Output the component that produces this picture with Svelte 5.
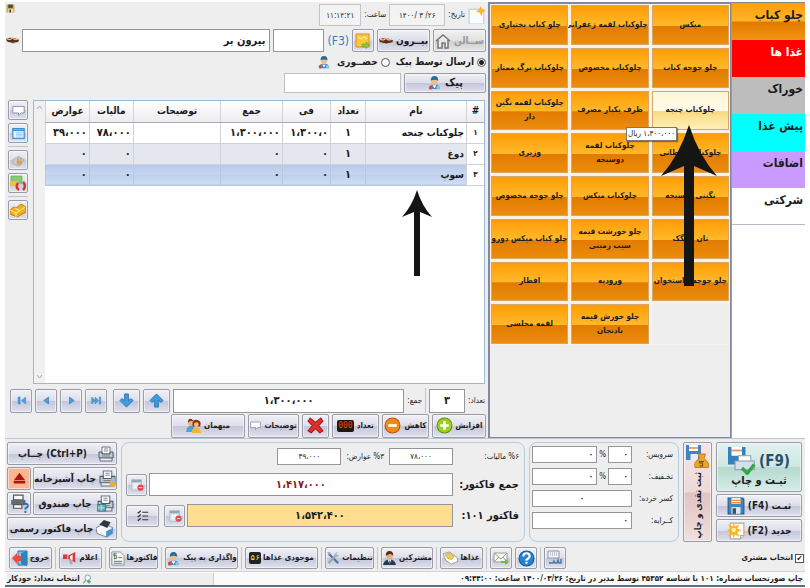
<script lang="ts">
  type Category = { name: string; kind: string }
  type OrderLine = { name: string; count: string; price: string; total: string; note: string; tax: string; duty: string }

  const categories: Category[] = [
    { name: 'چلو کباب', kind: 'kebab' },
    { name: 'غذا ها', kind: 'foods' },
    { name: 'خوراک', kind: 'stew' },
    { name: 'پیش غذا', kind: 'starter' },
    { name: 'اضافات', kind: 'extras' },
    { name: 'شرکتی', kind: 'company' },
  ]

  // a line break marks where a long dish name wraps on its tile
  const dishes = [
    'میکس', 'چلوکباب لقمه زعفرانی', 'چلو کباب بختیاری',
    'چلو جوجه کباب', 'چلوکباب مخصوص', 'چلوکباب برگ ممتاز',
    'چلوکباب چنجه', 'ظرف یکبار مصرف', 'چلوکباب لقمه نگین\nدار',
    'چلوکباب سلطانی', 'چلوکباب لقمه\nدوسیخه', 'وزیری',
    'نگینی دوسیخه', 'چلوکباب میکس', 'چلو جوجه مخصوص',
    'نان سنگک', 'چلو خورشت قیمه\nسیب زمینی', 'چلو کباب میکس دورو',
    'چلو جوجه بااستخوان', 'ورودیه', 'افطار',
    '', 'چلو خورش قیمه\nبادنجان', 'لقمه مجلسی',
  ]

  const lines: OrderLine[] = [
    { name: 'چلوکباب چنجه', count: '۱', price: '۱،۳۰۰،۰', total: '۱،۳۰۰،۰۰۰', note: '', tax: '۷۸،۰۰۰', duty: '۳۹،۰۰۰' },
    { name: 'دوغ', count: '۱', price: '۰', total: '۰', note: '', tax: '۰', duty: '۰' },
    { name: 'سوپ', count: '۱', price: '۰', total: '۰', note: '', tax: '۰', duty: '۰' },
  ]
  const rowNumbers = ['۱', '۲', '۳']

  let category = $state('kebab')
  let dish = $state('چلوکباب چنجه')
  let selected = $state(2)
  let delivery = $state('courier')
  let pickCustomer = $state(true)
</script>

{#snippet icon(name: string, size: number)}
  <svg class="icon" width={size} height={size} viewBox="0 0 16 16" aria-hidden="true">
    {#if name === 'floppy'}
      <path d="M1 1h13l1 1v13H1z" fill="#3f86c4" stroke="#285a8c" />
      <path d="M4 1h8v5H4z" fill="#fff" /><path d="M4 3h8M4 5h8" stroke="#e98a3a" />
      <path d="M4 9h8v6H4z" fill="#dfe6ee" /><path d="M5 10h3v5H5z" fill="#3b5268" />
    {:else if name === 'mini-floppy'}
      <path d="M1 1h14v14H1z" fill="#c9a94f" /><path d="M4 1h8v6H4z" fill="#4b4a3a" /><path d="M4 9h9v6H4z" fill="#eee2b4" /><path d="M6 10h3v5H6z" fill="#454230" />
    {:else if name === 'new'}
      <path d="M3 1h12v11l-3 3H3z" fill="#fffdf6" stroke="#b3aa98" /><path d="M15 12h-3v3" fill="#e8dfc8" stroke="#b3aa98" />
      <path d="M6 0l1 4 4-2-2 4 4 1-4 2 2 4-4-2-1 4-1-4-4 2 2-4-3-2 3-1-2-4 4 2z" fill="#ffb322" />
      <circle cx="6" cy="7" r="2" fill="#fff0a0" />
    {:else if name === 'dated'}
      <path d="M1 3h13v13H1z" fill="#fbfdff" stroke="#c4ccd8" />
      <path d="M11 0l1.500 3L16 4l-3 1.500L12 9l-1.500-3L7 5l3-2z" fill="#ffb51b" />
    {:else if name === 'house'}
      <path d="M1 8l7-6 7 6M3 7v8h4v-5h3v5h3V7" fill="#ececec" stroke="#777" stroke-width="1.500" />
    {:else if name === 'kebab'}
      <path d="M0 6q7-3 16 1l-1 3q-8 3-14-1z" fill="#5b2c1d" />
      <path d="M1 6l4 1 3-2 3 2 4-1" stroke="#efc18b" fill="none" stroke-width="1.500" /><path d="M2 10q6 3 13 0" stroke="#ddd" fill="none" />
    {:else if name === 'courier'}
      <path d="M2 15q0-5 6-5t6 5z" fill="#3d8dc4" /><circle cx="8" cy="7" r="3.500" fill="#f0bd8e" />
      <path d="M4 6q0-5 4-5t4 5q-4-2-8 0z" fill="#276b9c" /><path d="M6 11h4l-2 3z" fill="#fff" />
      <circle cx="4" cy="13.500" r="2" fill="#d84b3b" /><circle cx="12" cy="13.500" r="2" fill="#85c7e8" />
    {:else if name === 'note'}
      <path d="M1 1h13v13H1z" fill="#ffc83b" stroke="#d98f17" /><path d="M3 4l3 2 3-2 3 2" stroke="#fff1a5" fill="none" />
      <path d="M7 11h4V9l4 3-4 3.500V14H7z" fill="#8dc63f" stroke="#5e912a" stroke-width=".5" />
    {:else if name === 'comment'}
      <path d="M1 3h14v8h-4l-3 3v-3H1z" fill="#fdfdff" stroke="#79859b" />
    {:else if name === 'window'}
      <path d="M1 2h14v12H1z" fill="#e8f3fd" stroke="#418ecb" stroke-width="1.500" /><path d="M1 4h14" stroke="#418ecb" stroke-width="2" /><path d="M5 7h8M5 9h8M5 11h8" stroke="#8ebce3" />
    {:else if name === 'lockbox'}
      <path d="M1 7l7-4 7 4-6 8-8-3z" fill="#d3c8bd" stroke="#b3aba3" /><path d="M6 8h6v5H6z" fill="#d9a153" /><path d="M7 8V6q2-3 4 0v2" fill="none" stroke="#999" />
    {:else if name === 'refresh'}
      <path d="M1 1h11v7H1z" fill="#8bc974" stroke="#5b9d45" stroke-width=".6" /><path d="M0 6h8v5H0z" fill="#ebc04f" />
      <path d="M8 8q-3 4 1 7M13 15q4-4 0-8" fill="none" stroke="#d83737" stroke-width="2.500" />
    {:else if name === 'gold'}
      <path d="M0 8l4-3 2 1 5-4 5 3v5l-9 5-7-3z" fill="#f5ad20" stroke="#c77e0f" /><path d="M0 8l6 3 9-6M6 11v4M5 6l5 3" stroke="#fff09a" fill="none" />
    {:else if name === 'plus' || name === 'minus'}
      <circle cx="8" cy="8" r="7" fill={name === 'plus' ? '#9bd11c' : '#f18a18'} stroke={name === 'plus' ? '#5e9313' : '#b75a0b'} />
      <path d={name === 'plus' ? 'M4 8h8M8 4v8' : 'M4 8h8'} stroke="#fff" stroke-width="2.500" />
    {:else if name === 'cross'}
      <path d="M3 1l5 4 5-4 2 3-4 4 4 5-3 2-4-4-4 4-3-2 4-5-4-4z" fill="#df2f2b" stroke="#a91b1b" />
    {:else if name === 'guest'}
      <circle cx="5" cy="5" r="3" fill="#eab57b" /><path d="M2 5q0-5 4-4l3 3-4-1z" fill="#7b2e19" /><path d="M0 15q1-7 5-7t5 7z" fill="#4ea3d5" />
      <path d="M7 9q-1-8 5-7 5 1 3 7z" fill="#8c2f18" /><circle cx="11" cy="7" r="2.500" fill="#f0be87" /><path d="M6 16q0-6 5-6 5 1 5 6z" fill="#f4b333" />
    {:else if name === 'up'}
      <path d="M8 1l7 7-2 2-3-2v7H6V8l-3 2-2-2z" fill="#3d9ddf" stroke="#2a76b2" />
    {:else if name === 'down'}
      <path d="M8 15l7-7-2-2-3 2V1H6v7L3 6 1 8z" fill="#3d9ddf" stroke="#2a76b2" />
    {:else if name === 'next'}
      <path d="M5 3l7 5-7 5z" fill="#4aa0dc" stroke="#347eb5" />
    {:else if name === 'prev'}
      <path d="M11 3L4 8l7 5z" fill="#4aa0dc" stroke="#347eb5" />
    {:else if name === 'last'}
      <path d="M1 3l5 5-5 5zM6 3l5 5-5 5zM12 3h2v10h-2z" fill="#4aa0dc" stroke="#347eb5" stroke-width=".7" />
    {:else if name === 'first'}
      <path d="M14 3L8 8l6 5zM3 3h3v10H3z" fill="#4aa0dc" stroke="#347eb5" stroke-width=".7" />
    {:else if name.startsWith('printer')}
      <path d="M4 1h8v7H4z" fill="#fff" stroke="#6b7580" /><path d="M1 6h3v2h8V6h3v6H1z" fill="#c3cad1" stroke="#525c66" /><path d="M2 12h12v3H2z" fill="#e9ecee" stroke="#687480" /><path d="M6 3h4M6 5h4M4 10h8" stroke="#7a8794" />
      {#if name === 'printer-food'}<circle cx="13" cy="13" r="3" fill="#f1a83c" /><path d="M11 8h4v3h-4z" fill="#8fc0e6" />{/if}
      {#if name === 'printer-cash'}<path d="M0 9h8v6H0z" fill="#6bb0bf" stroke="#36798a" /><path d="M1 12h6M4 9v6" stroke="#d3edf2" stroke-width=".7" />{/if}
    {:else if name === 'print-office'}
      <path d="M0 7l7-4 8 4-6 8-8-3z" fill="#f6f7f8" stroke="#66717b" stroke-width=".7" /><path d="M3 4l4-4 6 2-3 5z" fill="#303a43" /><path d="M9 10l6-3v5l-6 4z" fill="#4b94cb" />
    {:else if name === 'help-printer'}
      <path d="M3 1h8v4H3z" fill="#fff" stroke="#555" /><path d="M1 5h12v4H1z" fill="#656b71" /><path d="M3 9h7v3H3z" fill="#fff" stroke="#555" /><path d="M11 9q4-2 4 1 0 1-2 2v1M13 14v2" stroke="#246eaf" stroke-width="1.500" fill="none" />
    {:else if name === 'eject'}
      <path d="M8 1l7 9H1zM1 11h14v3H1z" fill="#a91712" />
    {:else if name === 'calc'}
      <path d="M2 2h11v12H2z" fill="#dbe4ea" stroke="#b3bec8" /><path d="M2 2h11v3H2z" fill="#96a8b7" /><path d="M4 7h7M4 9h7M4 11h4" stroke="#fff" /><circle cx="12" cy="11" r="3.500" fill="#e44653" /><path d="M10 11h4" stroke="#fff" />
    {:else if name === 'checks'}
      <path d="M1 3l1 1 3-3M1 8l1 1 3-3M1 13l1 1 3-3M7 3h8M7 8h8M7 13h8" fill="none" stroke="#333" stroke-width="1.500" />
    {:else if name === 'cash'}
      <path d="M0 0h10v10H0z" fill="#3f86c4" /><path d="M2 0h6v4H2z" fill="#fff" /><path d="M2 2h6" stroke="#e98a3a" /><path d="M3 6h5v4H3z" fill="#e9edf1" />
      <path d="M8 6h5l-1 3q4 3 3 6H6q-1-4 3-6z" fill="#eba629" stroke="#b97b15" stroke-width=".6" /><path d="M12 11h-3v1h2v2H9" fill="none" stroke="#754c09" stroke-width=".8" />
    {:else if name === 'save-print'}
      <path d="M0 0h10v10H0z" fill="#3481bb" /><path d="M2 0h6v5H2z" fill="#fff" /><path d="M2 2h6" stroke="#f28a4d" />
      <path d="M6 5h7v4H6z" fill="#fff" stroke="#8da3b1" stroke-width=".6" /><path d="M4 8h11v5H4z" fill="#d6e0eb" stroke="#8a9bad" stroke-width=".6" /><path d="M8 12l3 3 4-5" stroke="#30a849" stroke-width="2" fill="none" />
    {:else if name === 'keyboard'}
      <path d="M1 1h11v7H1z" fill="#f4f5f7" stroke="#8b96a3" /><path d="M3 3h8M3 5h8" stroke="#8b96a3" stroke-dasharray="1 1" /><path d="M2 13h4l1-2 1 2h2l1-3 1 3h2V9" fill="none" stroke="#477ba5" stroke-width="1.500" />
    {:else if name === 'help'}
      <circle cx="8" cy="8" r="7" fill="#2781cf" stroke="#125798" /><path d="M5 6q0-3 3-3t3 3q0 1-3 3v1M8 11v2" stroke="#fff" stroke-width="2" fill="none" />
    {:else if name === 'mail'}
      <path d="M1 3h13v9H1z" fill="#f8f8f1" stroke="#9aa08f" /><path d="M1 3l7 6 6-6M1 12l5-5M14 12l-4-5" fill="none" stroke="#9aa08f" /><path d="M8 11h4V9l4 3-4 3v-2H8z" fill="#77b939" />
    {:else if name === 'plate'}
      <path d="M0 3l7-2 8 6 1 4-7 3-6-4z" fill="#fffdf3" stroke="#8e8b79" stroke-width=".8" /><path d="M2 4l5-2 5 4-3 3-4-1z" fill="#e9cf55" stroke="#ad8d27" stroke-width=".6" />
    {:else if name === 'person'}
      <circle cx="8" cy="5" r="3.500" fill="#e9ad78" /><path d="M4 5q0-5 4-5t4 5L9 3z" fill="#542c19" /><path d="M1 15q1-6 7-6t7 6z" fill="#243b57" /><path d="M6 9h4l-2 5z" fill="#fff" /><path d="M8 10v4" stroke="#c9392b" />
    {:else if name === 'tools'}
      <path d="M3 3l11 11" stroke="#4f7ba2" stroke-width="2.500" /><path d="M12 4L3 14" stroke="#9aa7b3" stroke-width="2.500" /><path d="M10 3q1-2 4-2l-2 2 1 2 2-1q0 3-4 3zM1 1h4v3H3z" fill="#a9b5c0" />
    {:else if name === 'invoice'}
      <path d="M2 1h9l4 4v10H2z" fill="#f6f7f5" stroke="#88918e" /><path d="M7 3H4v2h3v3H4M5 2v7M9 7h4M4 11h9M4 13h9" fill="none" stroke="#65716d" />
    {:else if name === 'horn'}
      <path d="M0 4h5v5H0zM6 5l8-4v12l-8-4z" fill="#d83b33" /><path d="M8 6l3-2v7L8 9z" fill="#f6f1ef" /><path d="M7 10h3l1 5H8z" fill="#a5adb4" />
    {:else if name === 'exit'}
      <path d="M6 1h9v14H6z" fill="#8ac1e9" stroke="#2a699c" /><path d="M9 3l6-2v15l-6-2z" fill="#2e83bf" /><path d="M0 8l5-5v3h4v5H5v3z" fill="#ec4b3f" />
    {:else if name === 'search'}
      <circle cx="9" cy="6" r="4.500" fill="#eef8ff" stroke="#879bab" stroke-width="1.500" /><path d="M6 10l-4 5" stroke="#879bab" stroke-width="2" /><path d="M8 12h6M11 9v6" stroke="#4aa94f" stroke-width="2" />
    {/if}
  </svg>
{/snippet}

<svelte:head><title>ثبت سفارش</title></svelte:head>

<div class="app" dir="rtl">
  <div class="top">
    <nav class="categories">
      {#each categories as c (c.kind)}
        <button class="category {c.kind}" aria-pressed={category === c.kind} onclick={() => (category = c.kind)}>{c.name}</button>
      {/each}
    </nav>

    <section class="menu">
      <div class="dishes">
        {#each dishes as d}
          {#if d}
            <button class="dish" class:active={dish === d} onclick={() => (dish = d)}>{d}</button>
          {:else}
            <span></span>
          {/if}
        {/each}
      </div>
      <div class="tip">۱،۳۰۰،۰۰۰ ریال</div>
      <svg class="pointer big" width="56" height="161" viewBox="0 0 56 161" aria-hidden="true">
        <path d="M28 0Q38 31 56 51L33 41V161H23V41L0 51Q18 31 28 0z" fill="#151515" />
      </svg>
    </section>

    <section class="order">
      <div class="row dates">
        {@render icon('dated', 18)}
        <label for="date">تاریخ:</label>
        <input id="date" class="stamp date" dir="ltr" value="۱۴۰۰/ ۳ /۲۶" />
        <label for="time">ساعت:</label>
        <input id="time" class="stamp time" dir="ltr" value="۱۱:۱۴:۲۱" />
        <span class="fill"></span>
        <span class="corner">{@render icon('mini-floppy', 9)}</span>
      </div>

      <div class="row place">
        <button class="btn hall" disabled>ســالن {@render icon('house', 16)}</button>
        <button class="btn out">بیــرون {@render icon('kebab', 14)}</button>
        <button class="btn square" aria-label="یادداشت">{@render icon('note', 16)}</button>
        <label class="key" for="code" dir="ltr">(F3)</label>
        <input id="code" class="code" />
        <input class="fill customer" aria-label="مشتری" value="بیرون بر" />
        {@render icon('kebab', 13)}
      </div>

      <div class="row send">
        <label><input type="radio" name="send" value="courier" bind:group={delivery} />ارسال توسط پیک</label>
        <label><input type="radio" name="send" value="person" bind:group={delivery} />حضــوری</label>
        {@render icon('courier', 14)}
      </div>

      <div class="row rider">
        <button class="btn">پیک {@render icon('courier', 15)}</button>
        <input aria-label="نام پیک" />
      </div>

      <div class="sheet">
        <div class="grid">
          <div class="cells">
            <table>
              <colgroup>
                <col class="w-no" /><col class="w-name" /><col class="w-count" /><col class="w-price" />
                <col class="w-total" /><col class="w-note" /><col class="w-tax" /><col class="w-tax" />
              </colgroup>
              <thead>
                <tr><th>#</th><th>نام</th><th>تعداد</th><th>فی</th><th>جمع</th><th>توضیحات</th><th>مالیات</th><th>عوارض</th></tr>
              </thead>
              <tbody>
                {#each lines as line, i}
                  <tr class:selected={selected === i} onclick={() => (selected = i)}>
                    <th scope="row">{rowNumbers[i]}</th>
                    <td>{line.name}</td>
                    <td class="num center">{line.count}</td>
                    <td class="num">{line.price}</td>
                    <td class="num">{line.total}</td>
                    <td>{line.note}</td>
                    <td class="num">{line.tax}</td>
                    <td class="num">{line.duty}</td>
                  </tr>
                {/each}
              </tbody>
            </table>
            <svg class="pointer small" width="30" height="86" viewBox="0 0 30 86" aria-hidden="true">
              <path d="M15 0Q20 16 30 27L18 22V86H12V22L0 27Q10 16 15 0z" fill="#151515" />
            </svg>
          </div>
          <div class="scroll" aria-hidden="true">
            <svg width="7" height="5" viewBox="0 0 7 5"><path d="M1 4l2.500-3L6 4" fill="none" stroke="#aaa" /></svg>
            <svg width="7" height="5" viewBox="0 0 7 5"><path d="M1 1l2.500 3L6 1" fill="none" stroke="#aaa" /></svg>
          </div>
        </div>
        <div class="side">
          <button class="btn" aria-label="پیام">{@render icon('comment', 13)}</button>
          <button class="btn" aria-label="پنجره">{@render icon('window', 13)}</button>
          <hr />
          <button class="btn" aria-label="قفل">{@render icon('lockbox', 13)}</button>
          <button class="btn" aria-label="تازه سازی">{@render icon('refresh', 16)}</button>
          <hr />
          <button class="btn" aria-label="بسته">{@render icon('gold', 16)}</button>
        </div>
      </div>

      <div class="row sums">
        <label for="count">تعداد:</label>
        <input id="count" class="count" value="۳" />
        <span class="bar"></span>
        <label for="sum">جمع:</label>
        <input id="sum" class="fill" value="۱،۳۰۰،۰۰۰" />
        <button class="btn wide" aria-label="بالا">{@render icon('up', 15)}</button>
        <button class="btn wide" aria-label="پایین">{@render icon('down', 15)}</button>
        <span></span>
        <button class="btn" aria-label="آخرین">{@render icon('last', 11)}</button>
        <button class="btn" aria-label="بعدی">{@render icon('next', 11)}</button>
        <button class="btn" aria-label="قبلی">{@render icon('prev', 11)}</button>
        <button class="btn" aria-label="اولین">{@render icon('first', 11)}</button>
      </div>

      <div class="row edits">
        <button class="btn more">افزایش {@render icon('plus', 17)}</button>
        <button class="btn less">کاهش {@render icon('minus', 17)}</button>
        <button class="btn less">تعداد <span class="led">000</span></button>
        <button class="btn drop" aria-label="حذف">{@render icon('cross', 17)}</button>
        <button class="btn notes">توضیحات {@render icon('comment', 11)}</button>
        <button class="btn guests">میهمان {@render icon('guest', 15)}</button>
      </div>
    </section>
  </div>

  <div class="bottom">
    <div class="commit">
      <button class="btn final"><span class="final-key">{@render icon('save-print', 28)}<bdi>(F9)</bdi></span>ثبـت و چاپ</button>
      <button class="btn">ثبـت <bdi>(F4)</bdi> {@render icon('floppy', 18)}</button>
      <button class="btn">جدید <bdi>(F2)</bdi> {@render icon('new', 18)}</button>
    </div>
    <button class="btn cash">{@render icon('cash', 24)}<span>ثبت نقدی و چاپ</span></button>

    <fieldset class="box extras-box">
      <div class="line">
        <label for="service">سرویس:</label>
        <input id="service" class="pct" value="۰" /><span>%</span><input class="fill" aria-label="مبلغ سرویس" value="۰" />
      </div>
      <div class="line">
        <label for="discount">تخـفیف:</label>
        <input id="discount" class="pct" value="۰" /><span>%</span><input class="fill" aria-label="مبلغ تخفیف" value="۰" />
      </div>
      <div class="line">
        <label for="round">کسر خرده:</label>
        <input id="round" class="fill mid" value="۰" />
      </div>
      <div class="line">
        <label for="fare">کــرایه:</label>
        <input id="fare" class="fill" value="۰" />
      </div>
    </fieldset>

    <fieldset class="box totals">
      <div class="line taxes">
        <label for="tax">%۶ مالیات:</label>
        <input id="tax" value="۷۸،۰۰۰" />
        <label class="duty" for="duty">%۳ عوارض:</label>
        <input id="duty" value="۳۹،۰۰۰" />
      </div>
      <div class="line large">
        <label for="total">جمع فاکتور:</label>
        <input id="total" class="fill red" value="۱،۴۱۷،۰۰۰" />
        <button class="btn" aria-label="محاسبه">{@render icon('calc', 14)}</button>
      </div>
      <div class="line large">
        <label for="invoice">فاکتور ۱۰۱:</label>
        <input id="invoice" class="fill due" value="۱،۵۴۲،۴۰۰" />
        <button class="btn" aria-label="محاسبه">{@render icon('calc', 14)}</button>
        <button class="btn list" aria-label="فهرست">{@render icon('checks', 12)}</button>
      </div>
    </fieldset>

    <div class="prints">
      <div class="pair"><button class="btn">{@render icon('printer', 16)}<span><bdi>(Ctrl+P)</bdi> چــاپ</span></button></div>
      <div class="pair">
        <button class="btn">{@render icon('printer-food', 17)}<span>چاپ آشپزخانه</span></button>
        <button class="btn tiny eject" aria-label="خروج کاغذ">{@render icon('eject', 13)}</button>
      </div>
      <div class="pair">
        <button class="btn">{@render icon('printer-cash', 17)}<span>چاپ صندوق</span></button>
        <button class="btn tiny" aria-label="راهنمای چاپ">{@render icon('help-printer', 19)}</button>
      </div>
      <div class="pair"><button class="btn">{@render icon('print-office', 18)}<span>چاپ فاکتور رسمی</span></button></div>
    </div>
  </div>

  <div class="tools">
    <label class="pick"><input type="checkbox" bind:checked={pickCustomer} />انتخاب مشتری</label>
    <button class="btn t1" aria-label="صفحه کلید">{@render icon('keyboard', 16)}</button>
    <span class="bar"></span>
    <button class="btn t1" aria-label="راهنما">{@render icon('help', 17)}</button>
    <button class="btn t1" aria-label="پیامک">{@render icon('mail', 16)}</button>
    <span class="bar"></span>
    <button class="btn t2">غذاها {@render icon('plate', 15)}</button>
    <span class="bar"></span>
    <button class="btn t4">مشترکین {@render icon('person', 15)}</button>
    <span class="bar"></span>
    <button class="btn t3">تنظیمات {@render icon('tools', 14)}</button>
    <span class="bar"></span>
    <button class="btn t5">موجودی غذاها <span class="led gold">۵۶</span></button>
    <span class="bar"></span>
    <button class="btn t5">واگذاری به پیک {@render icon('courier', 15)}</button>
    <span class="bar"></span>
    <button class="btn t3">فاکتورها {@render icon('invoice', 15)}</button>
    <span class="bar"></span>
    <button class="btn t2">اعلام {@render icon('horn', 14)}</button>
    <span class="bar"></span>
    <button class="btn t2">خروج {@render icon('exit', 16)}</button>
  </div>

  <footer>
    <span class="fill">چاپ صورتحساب شماره: ۱۰۱ با شناسه ۴۵۳۵۲ توسط مدیر در تاریخ: ۱۴۰۰/۰۳/۲۶ ساعت: ۰۹:۴۴:۰۰</span>
    <span class="mode">{@render icon('search', 10)} انتخاب تعداد: خودکار</span>
  </footer>
</div>

<style>
  :global(body) {
    margin: 0;
    background: #fff;
  }
  .app {
    margin: 2px 5px 0;
    background: #eeeeef;
    border-bottom: 2px solid #587080;
    font: bold 9px/12px 'DejaVu Sans Condensed', 'DejaVu Sans', sans-serif;
    color: #1c1c20;
  }
  .app * {
    box-sizing: border-box;
  }
  .icon {
    flex: none;
    display: block;
  }
  button,
  input {
    font: inherit;
    color: inherit;
    margin: 0;
    min-width: 0;
  }
  input {
    background: #fff;
    border: 1px solid #969698;
    padding: 0 4px;
    border-radius: 0;
  }
  input[type='radio'],
  input[type='checkbox'] {
    appearance: none;
    display: grid;
    place-items: center;
    width: 9px;
    height: 9px;
    padding: 0;
    border-color: #555;
  }
  input[type='radio'] {
    border-radius: 50%;
  }
  input[type='radio']:checked {
    background: radial-gradient(circle, #222 2px, #fff 3px);
  }
  input[type='checkbox']:checked::before {
    content: '✔';
    font-size: 8px;
    line-height: 8px;
  }
  .fill {
    flex: 1;
  }
  .btn {
    display: flex;
    align-items: center;
    justify-content: center;
    gap: 3px;
    padding: 0 2px;
    border: 1px solid #9a9ba8;
    border-radius: 2px;
    background: linear-gradient(#f0f0f5, #dddeea 50%, #c3c5d9 51%, #e0e1ed);
    box-shadow: inset 0 0 0 1px #ffffff80;
    white-space: nowrap;
  }
  .btn:disabled {
    color: #999;
    background: linear-gradient(#f1f1f1, #e2e2e2 50%, #cdcdcd 51%, #e5e5e5);
  }
  .bar {
    width: 1px;
    align-self: stretch;
    background: #c3c3ca;
  }

  .top {
    display: grid;
    grid-template-columns: 74fr 243fr 483fr;
    min-height: 436px;
  }
  .categories {
    background: #fff;
    border-left: 1px solid #9b9ba8;
    border-top: 1px solid #888;
  }
  .category {
    display: flex;
    width: 100%;
    height: 37px;
    padding: 4px 2px;
    border: 0;
    font-size: 12px;
    line-height: 16px;
  }
  .kebab {
    background: linear-gradient(#ff9d08, #ffb52a 49%, #e07900 51%, #f39610);
  }
  .foods {
    background: #f00;
    color: #fff;
  }
  .stew {
    background: #bdbdbd;
  }
  .starter {
    background: #0ff;
  }
  .extras {
    background: #c99aff;
  }
  .company {
    background: #fff;
    border-bottom: 1px solid #b7bcc4;
  }
  .menu {
    position: relative;
    border: 1px solid #85879a;
    border-width: 2px 1px 1px 2px;
  }
  .dishes {
    display: grid;
    grid-template: repeat(8, 1fr) / repeat(3, 1fr);
    gap: 3px;
    height: 341px;
    padding: 1px;
    background: #fbf1e6;
  }
  .dishes > span {
    background: #eeeeef;
  }
  .dish {
    padding: 0;
    border: 1px solid #d3a86c;
    background: linear-gradient(#ff9c06, #ffb92a 52%, #e27b00 53%, #ec8c0c);
    font-size: 8px;
    line-height: 14px;
    white-space: pre;
  }
  .dish.active {
    background: linear-gradient(#fff6d8, #fffbe8 50%, #f9d981 52%, #fff1b8);
  }
  .tip {
    position: absolute;
    right: 53px;
    top: 123px;
    padding: 0 1px;
    border: 1px solid #777;
    background: #fff;
    box-shadow: 1px 1px 1px #0006;
    font-size: 8px;
    font-weight: normal;
  }
  .pointer {
    position: absolute;
    pointer-events: none;
  }
  .big {
    right: 13px;
    top: 121px;
  }
  .order {
    display: flex;
    flex-direction: column;
    padding: 2px 2px 0 1px;
    min-width: 0;
  }
  .row {
    display: flex;
    align-items: center;
    gap: 3px;
  }
  .dates {
    height: 22px;
    font-size: 8px;
    font-weight: normal;
  }
  .dates input {
    height: 22px;
    border-color: #c4c4c8;
    background: #f3f3f4;
    text-align: center;
    padding: 0;
  }
  .date {
    width: 56px;
  }
  .time {
    width: 42px;
  }
  .corner {
    align-self: flex-start;
  }
  .place {
    height: 23px;
    margin-top: 3px;
    font-size: 11px;
  }
  .place > button,
  .place > input {
    height: 23px;
  }
  .hall,
  .out {
    width: 53px;
    font-size: 10px;
  }
  .square {
    width: 22px;
  }
  .key {
    color: #2a7fc8;
    font: 12px/16px 'DejaVu Sans Condensed', sans-serif;
  }
  .code {
    width: 51px;
  }
  .send {
    height: 20px;
    gap: 6px;
    font-size: 10px;
  }
  .send label {
    display: flex;
    align-items: center;
    gap: 3px;
  }
  .rider {
    height: 21px;
    font-size: 11px;
  }
  .rider > * {
    height: 20px;
  }
  .rider .btn {
    width: 82px;
  }
  .rider input {
    width: 117px;
    border-color: #c0c0c4;
  }
  .sheet {
    display: flex;
    flex: 1;
    gap: 5px;
    margin: 7px 1px 4px 2px;
    min-height: 200px;
  }
  .grid {
    display: flex;
    flex: 1;
    min-width: 0;
    border: 1px solid #9db9d2;
    background: #fff;
  }
  .cells {
    position: relative;
    flex: 1;
    min-width: 0;
  }
  .small {
    right: 52px;
    top: 89px;
  }
  table {
    width: 100%;
    table-layout: fixed;
    border-collapse: collapse;
    font-size: 10px;
    line-height: 14px;
  }
  .w-no { width: 4%; }
  .w-name { width: 23%; }
  .w-count { width: 8%; }
  .w-price { width: 11%; }
  .w-total { width: 14%; }
  .w-note { width: 20%; }
  .w-tax { width: 10%; }
  tr {
    height: 21px;
  }
  th,
  td {
    padding: 0 2px;
    border: 0 solid #d1d3d9;
    border-left-width: 1px;
    border-bottom-width: 1px;
    text-align: right;
    white-space: nowrap;
    overflow: hidden;
  }
  thead th {
    background: linear-gradient(#fff, #ececef);
    border-bottom-color: #a9abb0;
    text-align: center;
  }
  thead th:first-child {
    padding: 0;
  }
  tbody th {
    background: #fff;
    font-size: 8px;
    text-align: center;
    padding: 0;
  }
  tbody tr:nth-child(2) td {
    background: #e4e7ee;
  }
  tbody tr.selected td {
    background: linear-gradient(#b5c9ec, #c9d8f0 50%, #bdd0ee 51%, #d0def3);
    border-color: #b4c6e2;
  }
  td.num {
    font-size: 11px;
  }
  td.center {
    text-align: center;
  }
  .scroll {
    display: flex;
    flex-direction: column;
    justify-content: space-between;
    align-items: center;
    width: 11px;
    padding: 4px 0;
    background: #f0f0f1;
  }
  .side {
    display: flex;
    flex-direction: column;
    gap: 3px;
    width: 20px;
  }
  .side .btn {
    height: 20px;
    padding: 0;
  }
  .side hr {
    width: 100%;
    margin: 0;
    border: 0;
    border-top: 1px solid #c3c3ca;
  }
  .sums {
    height: 25px;
    padding: 0 1px 0 4px;
    font-size: 8px;
  }
  .sums label {
    font-weight: normal;
  }
  .sums > .btn,
  .sums > input {
    height: 24px;
  }
  .sums input {
    font-size: 11px;
    text-align: center;
  }
  .sums .btn {
    width: 22px;
    padding: 0;
  }
  .sums .wide {
    width: 27px;
  }
  .sums .count {
    width: 36px;
  }
  .edits {
    height: 25px;
    font-size: 8px;
  }
  .edits .btn {
    height: 24px;
  }
  .more { width: 54px; }
  .less { width: 47px; }
  .drop { width: 27px; }
  .notes { width: 51px; }
  .guests { width: 74px; }
  .led {
    padding: 0 1px;
    background: #241512;
    border-radius: 2px;
    color: #e8471f;
    font: 8px/12px 'DejaVu Sans Mono', monospace;
  }
  .led.gold {
    color: #ffe12b;
    background: #222;
  }

  .bottom {
    display: flex;
    gap: 4px;
    padding: 3px 3px 3px 2px;
    border-top: 1px solid #b9c6d5;
  }
  .commit,
  .prints {
    display: flex;
    flex-direction: column;
    gap: 2px;
    flex: none;
  }
  .commit {
    width: 86px;
    font-size: 10px;
  }
  .commit .btn {
    height: 23px;
  }
  .commit .final {
    height: 50px;
    flex-direction: column;
    gap: 0;
    font-size: 11px;
    background: linear-gradient(#e2f1ee, #cfe7e0 50%, #b6dacf 51%, #d6ece6);
  }
  .final-key {
    display: flex;
    flex-direction: row-reverse;
    align-items: center;
    gap: 3px;
    font-size: 15px;
    color: #24506c;
  }
  .cash {
    flex: none;
    width: 29px;
    flex-direction: column;
    font-size: 9px;
    background: linear-gradient(#f4e6e6, #eed8d8 50%, #e2c3c3 51%, #f0dede);
  }
  .cash span {
    writing-mode: vertical-rl;
    transform: rotate(180deg);
  }
  .box {
    display: flex;
    flex-direction: column;
    margin: 0;
    border: 1px solid #b4cbe0;
    border-radius: 8px;
    min-width: 0;
  }
  .line {
    display: flex;
    align-items: center;
    gap: 2px;
  }
  .line input {
    height: 17px;
  }
  .extras-box {
    flex: 146;
    gap: 5px;
    padding: 3px 5px 8px 2px;
    font-size: 8px;
    font-weight: normal;
  }
  .extras-box label {
    width: 39px;
  }
  .extras-box input {
    padding: 0 3px;
    font-weight: bold;
  }
  .extras-box input.mid {
    text-align: center;
  }
  .pct {
    width: 24px;
  }
  .totals {
    flex: 407;
    gap: 8px;
    padding: 5px 5px 12px 4px;
  }
  .taxes {
    font-size: 8px;
    font-weight: normal;
  }
  .totals label {
    width: 64px;
  }
  .totals label.duty {
    width: auto;
    margin: 0 3px;
  }
  .taxes input {
    width: 64px;
    text-align: center;
  }
  .large {
    font-size: 11px;
  }
  .large input {
    height: 23px;
    text-align: center;
  }
  .large .btn {
    width: 21px;
    height: 22px;
    padding: 0;
  }
  .large .list {
    width: 33px;
    margin-right: 3px;
  }
  .red {
    color: #8b1c1c;
  }
  .due {
    background: #ffdf8f;
  }
  .prints {
    width: 110px;
    font-size: 10px;
  }
  .pair {
    display: flex;
    gap: 2px;
  }
  .pair .btn {
    flex: 1;
    height: 23px;
  }
  .pair .btn span {
    flex: 1;
  }
  .pair .tiny {
    flex: none;
    width: 24px;
  }
  .pair .eject {
    background: #fbb58f;
  }

  .tools {
    display: flex;
    align-items: center;
    gap: 3px;
    height: 26px;
    padding: 0 1px 0 4px;
    font-size: 8px;
  }
  .tools .btn {
    flex: none;
    height: 22px;
    gap: 2px;
    padding: 0 1px;
  }
  .tools .bar {
    margin: 2px 0;
  }
  .t1 { width: 22px; }
  .t2 { width: 43px; }
  .t3 { width: 49px; }
  .t4 { width: 52px; }
  .t5 { width: 73px; }
  .pick {
    display: flex;
    align-items: center;
    gap: 2px;
    margin-left: auto;
  }
  footer {
    display: flex;
    height: 14px;
    padding: 0 2px;
    align-items: center;
    background: #fafafa;
    border-top: 1px solid #d4d4d8;
    font-size: 8px;
  }
  .mode {
    display: flex;
    flex: 0 0 26%;
    gap: 2px;
    align-items: center;
    justify-content: flex-end;
    border-right: 1px solid #ccc;
    background: #eeeeef;
  }
</style>
